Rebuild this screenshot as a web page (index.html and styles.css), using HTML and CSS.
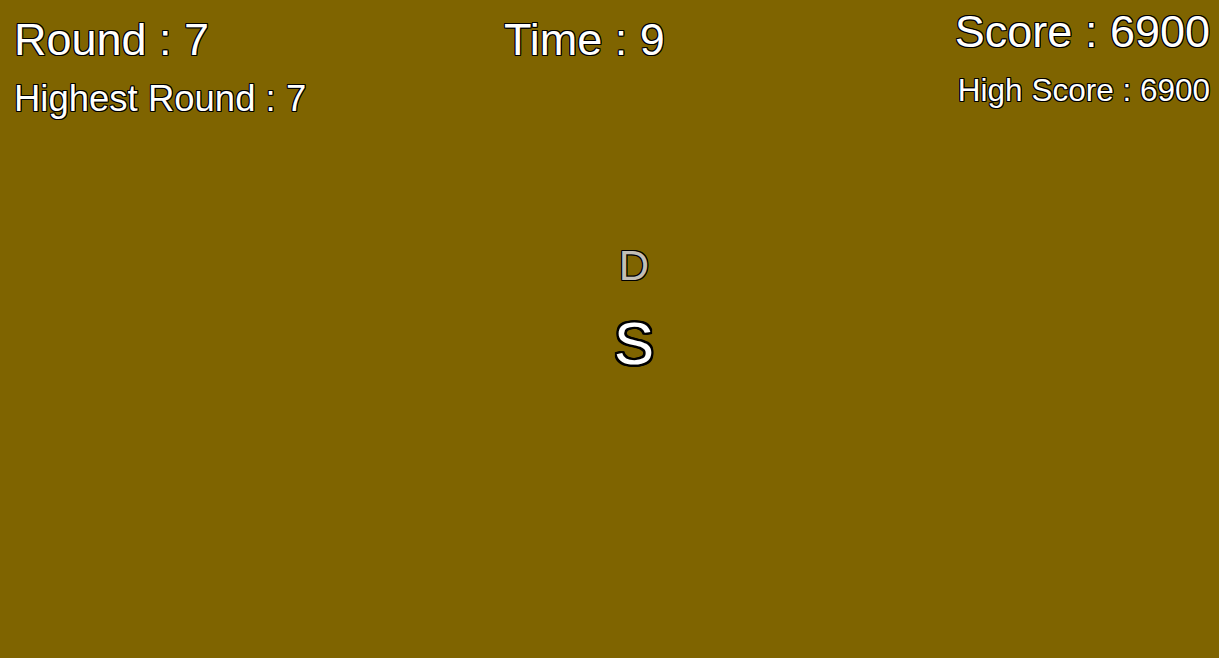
FILE: index.html
```html
<!DOCTYPE html>
<html>
<head>
<meta charset="utf-8">
<link rel="stylesheet" href="styles.css">
</head>
<body>
<div class="screen">
  <header class="hud">
    <div class="col left">
      <div class="big">Round : 7</div>
      <div class="small sub-left">Highest Round : 7</div>
    </div>
    <div class="col center">
      <div class="big">Time : 9</div>
    </div>
    <div class="col right">
      <div class="big">Score : 6900</div>
      <div class="smaller sub-right">High Score : 6900</div>
    </div>
  </header>
  <main class="letters">
    <div class="next">D</div>
    <div class="current">S</div>
  </main>
</div>
</body>
</html>
```
FILE: styles.css
```css
html, body {
  margin: 0;
  padding: 0;
  background: #7f6400;
}
.screen {
  width: 1219px;
  height: 658px;
  background: #7f6400;
  font-family: "Liberation Sans", Arial, sans-serif;
  color: #ffffff;
  overflow: hidden;
}
.hud {
  display: grid;
  grid-template-columns: 487px auto 1fr;
  padding: 0 9px 0 14px;
}
.col { display: flex; flex-direction: column; }
.left { padding-top: 14px; }
.center { padding-top: 14px; padding-left: 3px; }
.right { align-items: flex-end; padding-top: 6px; }
.big, .small, .smaller, .next, .current {
  line-height: normal;
  text-shadow:
    -1px -1px 0 #000, 1px -1px 0 #000, -1px 1px 0 #000, 1px 1px 0 #000,
    0 -1px 0 #000, 0 1px 0 #000, -1px 0 0 #000, 1px 0 0 #000;
}
.big { font-size: 45px; }
.small { font-size: 36.5px; }
.smaller { font-size: 31.5px; }
.sub-left { margin-top: 12px; }
.sub-right { margin-top: 14px; }
.letters {
  display: flex;
  flex-direction: column;
  align-items: center;
  padding-left: 49px;
  margin-top: 122px;
}
.next {
  font-size: 42px;
  color: #c2beb6;
}
.current {
  font-size: 60px;
  margin-top: 19px;
  text-shadow:
    -2px -2px 0 #000, 2px -2px 0 #000, -2px 2px 0 #000, 2px 2px 0 #000,
    0 -2px 0 #000, 0 2px 0 #000, -2px 0 0 #000, 2px 0 0 #000,
    -1px -2px 0 #000, 1px -2px 0 #000, -2px -1px 0 #000, 2px -1px 0 #000,
    -1px 2px 0 #000, 1px 2px 0 #000, -2px 1px 0 #000, 2px 1px 0 #000;
}
```
